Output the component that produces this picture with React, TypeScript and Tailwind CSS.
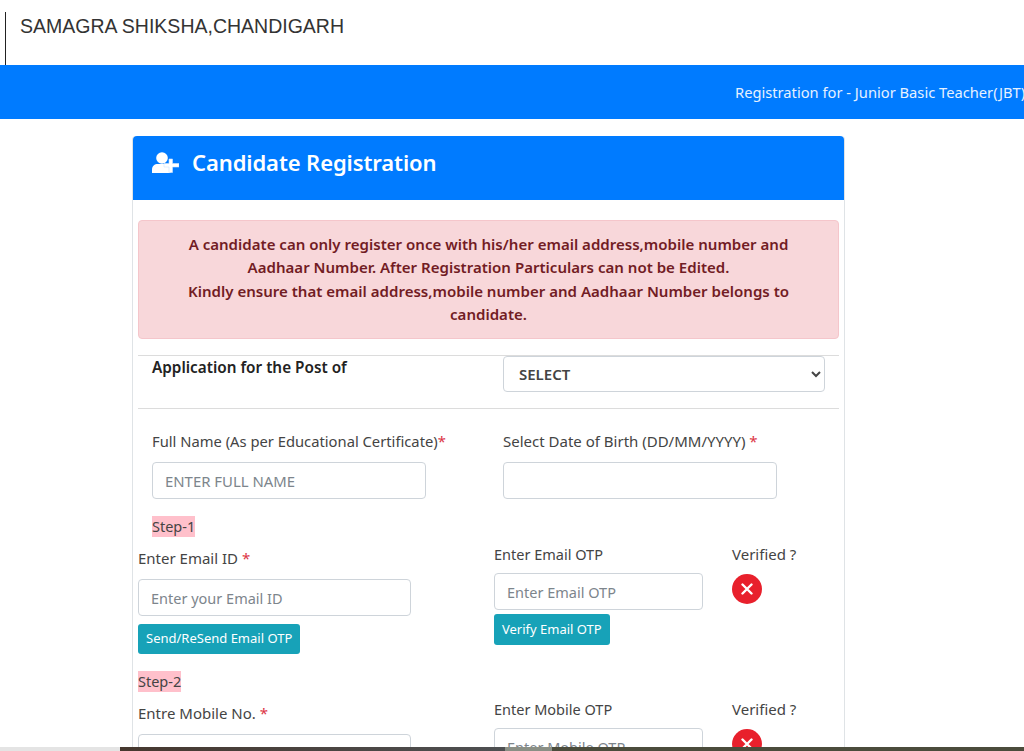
const font = "font-['Segoe_UI','Noto_Sans','Open_Sans',sans-serif]"

function Star() {
  return <span className="text-[#dc3545]"> *</span>
}

function Verified() {
  return (
    <div className="pl-[34px]">
      <div className="text-[15px] leading-[22px] text-[#444]">Verified ?</div>
      <div className="mt-[9px] flex h-[30px] w-[30px] items-center justify-center rounded-full bg-[#e8202c]">
        <svg width="12" height="12" viewBox="0 0 12 12" stroke="white" strokeWidth="2.4" strokeLinecap="round">
          <path d="M1.5 1.5 10.500 10.500M10.500 1.5 1.5 10.500" />
        </svg>
      </div>
    </div>
  )
}

function Input({ placeholder, className }: { placeholder?: string; className: string }) {
  return (
    <input
      placeholder={placeholder}
      className={`block h-[37px] rounded-[4px] border border-[#ced4da] bg-white px-3 text-[#495057] placeholder:text-[#7d858c] ${className}`}
    />
  )
}

function Step({ children }: { children: string }) {
  return <div className="w-fit bg-[#ffc0cb] text-[14.5px] leading-[21px] text-[#444]">{children}</div>
}

function Btn({ children, className }: { children: string; className: string }) {
  return <button className={`block rounded-[3px] bg-[#17a2b8] px-2 text-[13px] text-white ${className}`}>{children}</button>
}

export default function App() {
  return (
    <div className={`relative h-[751px] w-[1024px] overflow-hidden bg-white ${font}`}>
      <header className="h-[65px] pl-[5px] pt-[12px]">
        <div className="h-[53px] border-l border-[#222] pl-[14px] font-['Liberation_Sans',sans-serif] text-[19.5px] leading-[29px] text-[#333]">
          SAMAGRA SHIKSHA,CHANDIGARH
        </div>
      </header>

      <div className="flex h-[54px] items-center whitespace-nowrap bg-[#007bff] pl-[735px] pt-[1px] text-[14.7px] text-[#e6f1ff]">
        Registration for - Junior Basic Teacher(JBT)
      </div>

      <main className="ml-[132px] mt-[17px] w-[713px] rounded-t-[4px] border-x border-[#dfe3e6]">
        <div className="flex h-[64px] items-center gap-[13px] rounded-t-[4px] bg-[#007bff] pb-[12px] pl-[19px] text-white">
          <svg width="27" height="21" viewBox="0 0 27 21" fill="currentColor">
            <circle cx="10" cy="6" r="5.800" />
            <path d="M0 21v-3.500C0 14 2.500 12 6 12h8c2 0 3.500.6 4.500 1.500V21H2z" />
            <path d="M17 7h3.500v4.500H27v3.500h-6.500v5.500H17V15h-5v-3.500h5z" stroke="#cfe4ff" strokeWidth=".6" />
          </svg>
          <h1 className="text-[22px] font-semibold leading-none tracking-[-0.1px]">Candidate Registration</h1>
        </div>

        <div className="px-[5px] pt-[20px]">
          <div className="rounded-[4px] border border-[#f5c6cb] bg-[#f8d7da] px-[20px] py-[12px] text-center text-[15.05px] font-semibold leading-[23.300px] text-[#721c24]">
            A candidate can only register once with his/her email address,mobile number and Aadhaar Number. After Registration Particulars can not be Edited.
            <br />
            Kindly ensure that email address,mobile number and Aadhaar Number belongs to candidate.
          </div>

          <div className="mt-[16px] flex h-[54px] border-y border-[#dcdcdc]">
            <div className="w-[365px] pl-[14px] text-[15.3px] font-semibold leading-[22px] text-[#222]">Application for the Post of</div>
            <select className="h-[36px] w-[322px] rounded-[4px] border border-[#ced4da] bg-white pl-[11px] text-[15px] font-semibold text-[#444]">
              <option>SELECT</option>
            </select>
          </div>

          <div className="mt-[21px] flex">
            <div className="w-[365px] pl-[14px]">
              <div className="text-[14.75px] leading-[22px] text-[#444]">Full Name (As per Educational Certificate)<span className="text-[#dc3545]">*</span></div>
              <Input placeholder="ENTER FULL NAME" className="mt-[10px] w-[274px] text-[14.9px]" />
            </div>
            <div>
              <div className="text-[15px] leading-[22px] text-[#444]">Select Date of Birth (DD/MM/YYYY)<Star /></div>
              <Input className="mt-[10px] w-[274px] text-[15px]" />
            </div>
          </div>

          <div className="mt-[17px] pl-[14px]"><Step>Step-1</Step></div>

          <div className="flex">
            <div className="w-[356px]">
              <div className="mt-[10px] text-[15px] leading-[22px] text-[#444]">Enter Email ID<Star /></div>
              <Input placeholder="Enter your Email ID" className="mt-[10px] w-[273px] text-[14.5px]" />
              <Btn className="mt-[8px] h-[30px]">Send/ReSend Email OTP</Btn>
            </div>
            <div className="w-[204px]">
              <div className="mt-[6px] text-[14.5px] leading-[22px] text-[#444]">Enter Email OTP</div>
              <Input placeholder="Enter Email OTP" className="mt-[8px] w-[209px] text-[14.5px]" />
              <Btn className="mt-[4px] h-[31px]">Verify Email OTP</Btn>
            </div>
            <div className="mt-[6px]"><Verified /></div>
          </div>

          <div className="mt-[17px]"><Step>Step-2</Step></div>

          <div className="flex">
            <div className="w-[356px]">
              <div className="mt-[10px] text-[15px] leading-[22px] text-[#444]">Entre Mobile No.<Star /></div>
              <Input className="mt-[10px] w-[273px] text-[14.5px]" />
            </div>
            <div className="w-[204px]">
              <div className="mt-[6px] text-[14.5px] leading-[22px] text-[#444]">Enter Mobile OTP</div>
              <Input placeholder="Enter Mobile OTP" className="mt-[8px] w-[209px] text-[14.5px]" />
            </div>
            <div className="mt-[6px]"><Verified /></div>
          </div>
        </div>
      </main>

      {/* strip of the window below the page */}
      <div className="absolute inset-x-0 bottom-0 flex h-[4px] bg-[#e4e4e4]">
        <div className="ml-[120px] w-[385px] bg-gradient-to-r from-[#46382f] to-[#4e5052]" />
        <div className="w-[47px] bg-[#8a8f85]" />
        <div className="flex-1 bg-[#4b4c3c]" />
      </div>
    </div>
  )
}
